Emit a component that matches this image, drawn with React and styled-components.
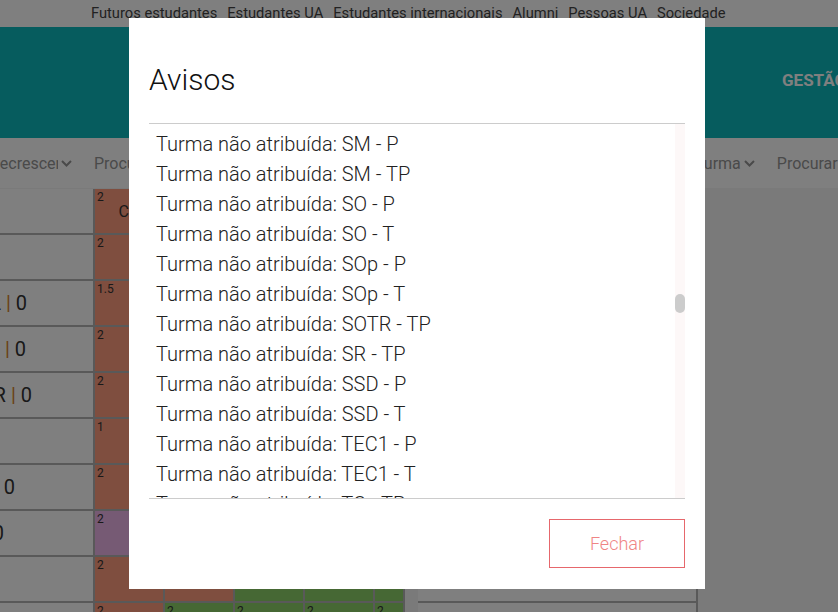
import React, { useLayoutEffect, useRef, useState } from "react";
import styled, { createGlobalStyle } from "styled-components";

const GlobalStyle = createGlobalStyle`
  * { box-sizing: border-box; }
  html, body {
    margin: 0;
    padding: 0;
    height: 100%;
    overflow: hidden;
  }
  body {
    font-family: Roboto, "Liberation Sans", Arial, sans-serif;
    background: #f4f4f4;
  }
`;

const TOP_LINKS = [
  "Futuros estudantes",
  "Estudantes UA",
  "Estudantes internacionais",
  "Alumni",
  "Pessoas UA",
  "Sociedade",
];

const BROWN = "#fe9c7e";
const GREEN = "#8cd068";
const PURPLE = "#ecb4e8";

// left column text, hours + colour per slot
const ROWS = [
  { label: "", trail: 66, slots: [[2, BROWN, "CD"], [2, BROWN], [2, GREEN], [2, GREEN], [2, GREEN]] },
  { label: "", trail: 66, slots: [[2, BROWN], [2, BROWN], [2, GREEN], [2, GREEN], [2, GREEN]] },
  { label: "PL | 0", trail: 66, slots: [[1.5, BROWN], [2, BROWN], [2, GREEN], [2, GREEN], [2, GREEN]] },
  { label: "TP | 0", trail: 67, slots: [[2, BROWN], [2, BROWN], [2, GREEN], [2, GREEN], [2, GREEN]] },
  { label: "SR | 0", trail: 61, slots: [[2, BROWN], [2, BROWN], [2, GREEN], [2, GREEN], [2, GREEN]] },
  { label: "", trail: 66, slots: [[1, BROWN], [2, BROWN], [2, GREEN], [2, GREEN], [2, GREEN]] },
  { label: "0", trail: 78, slots: [[2, BROWN], [2, BROWN], [2, GREEN], [2, GREEN], [2, GREEN]] },
  { label: "0", trail: 89, slots: [[2, PURPLE], [2, BROWN], [2, GREEN], [2, GREEN], [2, GREEN]] },
  { label: "", trail: 66, slots: [[2, BROWN], [null, BROWN], [null, GREEN], [null, GREEN], [null, GREEN]] },
  { label: "", trail: 66, slots: [[2, BROWN], [2, GREEN], [2, GREEN], [2, GREEN], [2, GREEN]] },
];

const BEFORE = [
  "AC", "ACA", "AED", "AI", "ALGA", "AMS", "APD", "ARA", "ASO", "BD", "CA", "CBD",
  "CC", "CD", "CDI", "CG", "CI", "CM", "CP", "CR", "CSI", "CSLP", "DA", "DS", "EA",
  "ECT", "ED", "EI", "ES", "FP", "GE", "GPI", "IA", "IAC", "IC", "ICM", "IHC", "IPC",
  "LFA", "LSD", "MAS", "MC", "MD", "MPEI", "MSR", "PDS", "PEI", "PI", "POO", "PSR",
  "RC", "RS", "SAD", "SBD", "SD", "SE", "SIO",
];

const SHOWN = [
  "SM - P", "SM - TP", "SO - P", "SO - T", "SOp - P", "SOp - T", "SOTR - TP",
  "SR - TP", "SSD - P", "SSD - T", "TEC1 - P", "TEC1 - T", "TC - TP",
];

const AFTER = ["TI", "TPW", "TQS", "TSI", "VC", "VI"];

function buildNotices() {
  const before = [];
  BEFORE.forEach((code) => {
    before.push(`${code} - P`, `${code} - T`);
  });
  const after = [];
  AFTER.forEach((code) => after.push(`${code} - P`, `${code} - T`, `${code} - TP`));
  const codes = [...BEFORE, ...SHOWN.map((s) => s.split(" ")[0]), ...AFTER];
  const rest = [
    ...codes.map((code) => `Docente não atribuído: ${code}`),
    ...codes.map((code) => `Sala não atribuída: ${code}`),
  ];
  return {
    list: [
      ...before.slice(0, 111).map((t) => `Turma não atribuída: ${t}`),
      ...SHOWN.map((t) => `Turma não atribuída: ${t}`),
      ...after.map((t) => `Turma não atribuída: ${t}`),
      ...rest,
    ].slice(0, 245),
    firstShown: 111,
  };
}

const NOTICES = buildNotices();
const ROW_H = 30;
const LIST_PAD = 12;
const VIEW_H = 374;

/* ---------- page behind the dialog ---------- */

const TopBar = styled.nav`
  height: 27px;
  background: #fff;
  display: flex;
  align-items: center;
  gap: 10px;
  padding: 0 0 2px 91px;
  a {
    color: #444;
    font-size: 14.7px;
    text-decoration: none;
    white-space: nowrap;
  }
`;

const Banner = styled.header`
  height: 111px;
  background: #0cb8bc;
  display: flex;
  align-items: center;
  padding: 0 0 5px 782px;
  overflow: hidden;
  white-space: nowrap;
`;

const BannerTitle = styled.h1`
  margin: 0;
  font-size: 17px;
  font-weight: 700;
  color: #fff;
`;

const Workspace = styled.div`
  overflow: hidden;
`;

const WorkspaceInner = styled.div`
  width: 1300px;
`;

const Toolbar = styled.div`
  height: 50px;
  background: #fff;
  margin-bottom: 1px;
  display: flex;
  align-items: center;
  padding-left: 39px;
  color: #949494;
  font-size: 16px;
  white-space: nowrap;
`;

const Select = styled.div`
  display: flex;
  align-items: center;
  gap: 3px;
  margin-left: ${(p) => p.$offset || 0}px;
`;

const SelectValue = styled.span`
  display: block;
  width: ${(p) => (p.$w ? `${p.$w}px` : "auto")};
  overflow: hidden;
`;

const Search = styled.span`
  display: block;
  width: ${(p) => (p.$w ? `${p.$w}px` : "auto")};
  margin-left: 22px;
  overflow: hidden;
`;

const Chevron = () => (
  <svg width="11" height="7" viewBox="0 0 11 7" fill="none">
    <polyline points="1,1 5.5,5.5 10,1" stroke="#949494" strokeWidth="2" />
  </svg>
);

const Board = styled.div`
  display: flex;
  align-items: flex-start;
  gap: 13px;
`;

const Grid = styled.div`
  display: grid;
  grid-template-columns: ${(p) => p.$cols};
  grid-auto-rows: 44px;
  gap: 2px;
  padding-right: 2px;
  background: #b2b2b2;
`;

const NameCell = styled.div`
  background: #fff;
  display: flex;
  align-items: center;
  justify-content: flex-end;
  padding-right: ${(p) => p.$trail}px;
  overflow: hidden;
  white-space: pre;
  font-size: 20px;
  color: #333;
  b {
    font-weight: 400;
    color: #d4842c;
  }
`;

const Slot = styled.div`
  background: ${(p) => p.$tone};
  display: grid;
  overflow: hidden;
  & > * {
    grid-area: 1 / 1;
  }
`;

const Hours = styled.span`
  align-self: start;
  justify-self: start;
  padding: 1px 2px;
  font-size: 12px;
  line-height: 14px;
  color: #333;
`;

const Course = styled.span`
  align-self: center;
  justify-self: center;
  font-size: 16px;
  color: #333;
`;

const BlankCell = styled.div`
  background: #fff;
`;

/* ---------- dialog ---------- */

const Backdrop = styled.div`
  position: fixed;
  inset: 0;
  background: rgba(0, 0, 0, 0.5);
  display: flex;
  justify-content: center;
  align-items: flex-start;
  padding: 18px 4px 0 0;
`;

const Dialog = styled.div`
  width: 576px;
  height: 571px;
  background: #fff;
  padding: 0 20px;
  display: flex;
  flex-direction: column;
`;

const DialogHeader = styled.div`
  height: 106px;
  padding-top: 44px;
  border-bottom: 1px solid #ccc;
`;

const DialogTitle = styled.h2`
  margin: 0;
  font-size: 30px;
  line-height: 36px;
  font-weight: 300;
  color: #111;
`;

const DialogBody = styled.div`
  height: ${VIEW_H + 1}px;
  border-bottom: 1px solid #ccc;
  display: flex;
`;

const NoticeList = styled.div`
  flex: 1;
  overflow-y: auto;
  padding-top: ${LIST_PAD}px;
  scrollbar-width: none;
  &::-webkit-scrollbar {
    display: none;
  }
`;

const ScrollTrack = styled.div`
  width: 10px;
  flex-shrink: 0;
  background: #fdf8f8;
`;

const ScrollThumb = styled.div`
  width: 10px;
  background: #ccc;
  border-radius: 5px;
`;

const Notice = styled.div`
  padding-left: 7px;
  font-size: 20px;
  font-weight: 300;
  line-height: ${ROW_H}px;
  color: #212121;
  white-space: nowrap;
`;

const DialogFooter = styled.div`
  display: flex;
  justify-content: flex-end;
  padding-top: 20px;
`;

const CloseButton = styled.button`
  width: 136px;
  height: 49px;
  background: #fff;
  border: 1px solid #e6676c;
  color: #ef8585;
  font-family: inherit;
  font-size: 18px;
  font-weight: 300;
  cursor: pointer;
`;

function Label({ text }) {
  if (!text.includes("|")) return <span>{text}</span>;
  const [a, b] = text.split("|");
  return (
    <span>
      {a}
      <b>|</b>
      {b}
    </span>
  );
}

export default function App() {
  const workspaceRef = useRef(null);
  const listRef = useRef(null);
  const [thumb, setThumb] = useState({ top: 0, height: 20 });

  const syncThumb = () => {
    const el = listRef.current;
    if (!el) return;
    const total = el.scrollHeight;
    const view = el.clientHeight;
    const height = Math.max(18, (view * view) / total);
    const top = (el.scrollTop / (total - view)) * (view - height);
    setThumb({ top, height });
  };

  useLayoutEffect(() => {
    if (workspaceRef.current) workspaceRef.current.scrollLeft = 100;
    if (listRef.current) {
      listRef.current.scrollTop = NOTICES.firstShown * ROW_H + LIST_PAD - 5;
      syncThumb();
    }
  }, []);

  return (
    <>
      <GlobalStyle />
      <TopBar>
        {TOP_LINKS.map((l) => (
          <a key={l} href="#">
            {l}
          </a>
        ))}
      </TopBar>
      <Banner>
        <BannerTitle>GESTÃO DE HORÁRIOS</BannerTitle>
      </Banner>

      <Workspace ref={workspaceRef}>
        <WorkspaceInner>
          <Toolbar>
            <Select>
              <SelectValue $w={119}>Ordem decrescente</SelectValue>
              <Chevron />
            </Select>
            <Search $w={591}>Procurar disciplina</Search>
            <Select $offset={10}>
              <SelectValue>Turma</SelectValue>
              <Chevron />
            </Select>
            <Search>Procurar turma</Search>
          </Toolbar>

          <Board>
            <Grid $cols="193px repeat(4, 68px) 28px">
              {ROWS.map((row, r) => (
                <React.Fragment key={r}>
                  <NameCell $trail={row.trail}>
                    <Label text={row.label} />
                  </NameCell>
                  {row.slots.map(([h, tone, course], s) => (
                    <Slot key={s} $tone={tone}>
                      {h !== null && <Hours>{h}</Hours>}
                      {course && <Course>{course}</Course>}
                    </Slot>
                  ))}
                </React.Fragment>
              ))}
            </Grid>
            <Grid $cols="278px">
              {ROWS.map((_, r) => (
                <BlankCell key={r} />
              ))}
            </Grid>
          </Board>
        </WorkspaceInner>
      </Workspace>

      <Backdrop>
        <Dialog role="dialog" aria-modal="true">
          <DialogHeader>
            <DialogTitle>Avisos</DialogTitle>
          </DialogHeader>
          <DialogBody>
            <NoticeList ref={listRef} onScroll={syncThumb}>
              {NOTICES.list.map((n, i) => (
                <Notice key={i}>{n}</Notice>
              ))}
            </NoticeList>
            <ScrollTrack>
              <ScrollThumb style={{ marginTop: thumb.top, height: thumb.height }} />
            </ScrollTrack>
          </DialogBody>
          <DialogFooter>
            <CloseButton>Fechar</CloseButton>
          </DialogFooter>
        </Dialog>
      </Backdrop>
    </>
  );
}
